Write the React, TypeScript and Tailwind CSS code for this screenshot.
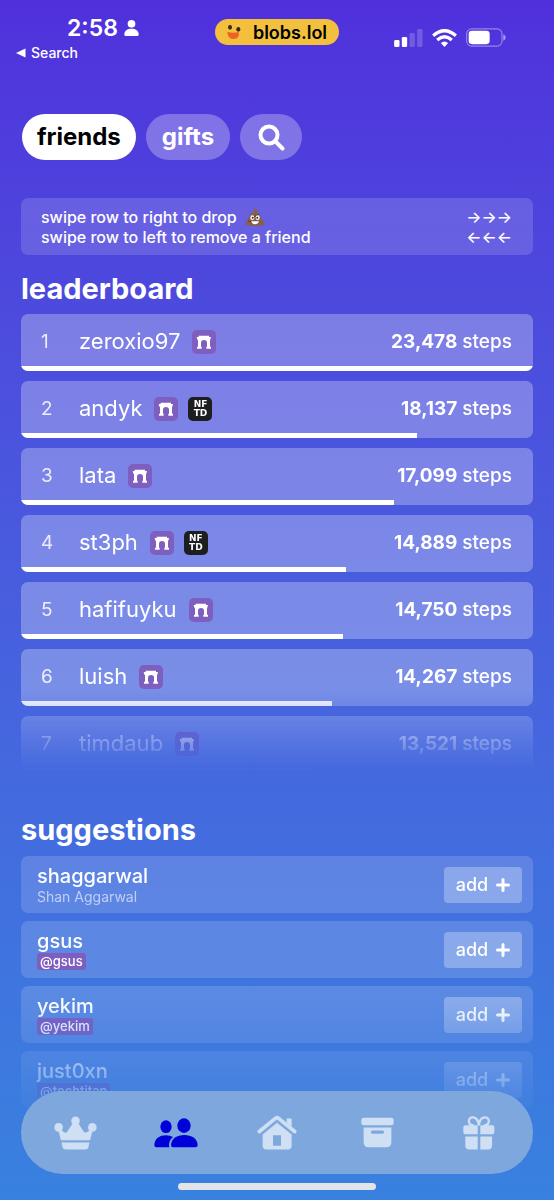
import React from "react";

type Player = { name: string; steps: number; nftd?: boolean };

const players: Player[] = [
  { name: "zeroxio97", steps: 23478 },
  { name: "andyk", steps: 18137, nftd: true },
  { name: "lata", steps: 17099 },
  { name: "st3ph", steps: 14889, nftd: true },
  { name: "hafifuyku", steps: 14750 },
  { name: "luish", steps: 14267 },
  { name: "timdaub", steps: 13521 },
];

const suggestions = [
  { name: "shaggarwal", note: "Shan Aggarwal", handle: false },
  { name: "gsus", note: "@gsus", handle: true },
  { name: "yekim", note: "@yekim", handle: true },
  { name: "just0xn", note: "@techtitan", handle: true },
];

function StatusBar() {
  return (
    <header className="grid h-[66px] grid-cols-[1fr_auto_1fr] items-start px-4 pt-4">
      <div>
        <div className="flex items-center gap-[6px] pl-[51px]">
          <span className="text-[23px] leading-6 font-semibold">2:58</span>
          <svg viewBox="0 0 45 50" className="h-4 w-[15px]" fill="currentColor" aria-hidden="true">
            <circle cx="22.5" cy="12" r="12" />
            <path d="M0 45C0 33 10 27 22.500 27S45 33 45 45q0 5-5 5H5q-5 0-5-5z" />
          </svg>
        </div>
        <a href="#search" className="mt-1 flex items-center gap-[5px] text-[14px] leading-[18px] font-medium">
          <svg viewBox="0 0 10 10" className="size-[10px]" fill="currentColor" aria-hidden="true">
            <path d="M0 5 9.500.5v9z" />
          </svg>
          Search
        </a>
      </div>
      <div className="mt-[3px] flex h-[26px] items-center gap-3 rounded-full bg-[#f3c03e] px-3 text-[18px] font-semibold text-black">
        <svg viewBox="0 0 42 42" className="size-[14px]" aria-hidden="true">
          <ellipse cx="9" cy="7" rx="6" ry="7" fill="#3c2a16" />
          <ellipse cx="34" cy="13" rx="6" ry="7" fill="#3c2a16" />
          <path d="M1 20q16 6 34 1q4 21-15 21Q2 42 1 20z" fill="#ef6225" />
        </svg>
        <span>blobs.lol</span>
      </div>
      <div className="mt-3 flex items-center justify-end gap-[9px] pr-8">
        <svg viewBox="0 0 86 54" className="h-[18px] w-[29px]" fill="currentColor" aria-hidden="true">
          <rect x="0" y="33" width="16" height="21" rx="4" />
          <rect x="23" y="24" width="16" height="30" rx="4" />
          <rect x="46" y="12" width="16" height="42" rx="4" opacity=".2" />
          <rect x="69" y="0" width="16" height="54" rx="4" opacity=".2" />
        </svg>
        <svg viewBox="0 0 74 54" className="h-[18px] w-[25px]" fill="none" stroke="currentColor" strokeWidth="10" aria-hidden="true">
          <path d="M3 20Q37-10 71 20" />
          <path d="M15 33Q37 14 59 33" />
          <path d="M26 42Q37 33 48 42L37 54z" fill="currentColor" stroke="none" />
        </svg>
        <svg viewBox="0 0 120 56" className="h-[19px] w-10" aria-hidden="true">
          <rect x="2" y="2" width="106" height="52" rx="15" fill="none" stroke="#fff" strokeOpacity=".4" strokeWidth="3.500" />
          <rect x="8" y="8" width="63" height="40" rx="10" fill="#fff" />
          <path d="M112 18q7 3 7 10t-7 10z" fill="#fff" fillOpacity=".5" />
        </svg>
      </div>
    </header>
  );
}

function ArchBadge() {
  return (
    <svg viewBox="0 0 72 72" className="size-6 shrink-0" role="img" aria-label="farcaster">
      <rect width="72" height="72" rx="15" fill="#7e5fc0" />
      <path
        d="M20 17H51V21H57L55 29H54V50H57V56H43V50H45V38Q45 30 36 30T27 38V50H29V56H15V50H18V29H16L14 21H20z"
        fill="#fff"
      />
    </svg>
  );
}

function NftdBadge() {
  return (
    <span className="flex size-6 shrink-0 flex-col items-center justify-center rounded-[5px] bg-[#1d1e20] font-['DejaVu_Sans',sans-serif] text-[9px] leading-[9px] font-bold">
      <span>NF</span>
      <span>TD</span>
    </span>
  );
}

function Poop() {
  return (
    <svg viewBox="0 0 60 54" className="h-[18px] w-5" role="img" aria-label="poop">
      <path
        d="M27 0Q39 5 38 14Q47 18 45 26Q55 30 51 37Q62 42 58 49Q55 54 30 54T2 49Q-1 41 9 37Q5 29 15 25Q13 17 22 14Q30 10 27 0z"
        fill="#86604c"
      />
      <path d="M16 26Q30 27 42 19M10 38Q12 41 18 41" fill="none" stroke="#56372b" strokeWidth="3" />
      <ellipse cx="22" cy="29" rx="6" ry="7" fill="#fff" />
      <ellipse cx="38" cy="29" rx="6" ry="7" fill="#fff" />
      <circle cx="23" cy="29" r="3" fill="#222" />
      <circle cx="37" cy="29" r="3" fill="#222" />
      <path d="M19 40H42Q39 49 30 49T19 40z" fill="#fff" />
    </svg>
  );
}

function PlayerRow({ player, rank, top }: { player: Player; rank: number; top: number }) {
  return (
    <li className="flex h-[57px] shrink-0 flex-col overflow-hidden rounded-[7px] bg-white/28">
      <div className="flex flex-1 items-center pt-[3px] pr-[21px] pl-5 leading-[27px]">
        <span className="w-[38px] text-[19px] text-white/85">{rank}</span>
        <span className="text-[22px]">{player.name}</span>
        <span className="ml-3 flex gap-[10px]">
          <ArchBadge />
          {player.nftd && <NftdBadge />}
        </span>
        <span className="ml-auto text-[19px] font-medium">
          <b className="font-bold">{player.steps.toLocaleString("en-US")}</b> steps
        </span>
      </div>
      <div className="h-[5px] bg-white" style={{ width: `${(player.steps / top) * 100}%` }} />
    </li>
  );
}

function CrownIcon() {
  return (
    <svg viewBox="163 228 130 100" className="h-[34px] w-[43px]" fill="currentColor" aria-hidden="true">
      <circle cx="228" cy="241" r="13" />
      <circle cx="177" cy="261" r="13" />
      <circle cx="279" cy="261" r="13" />
      <path d="M174 261L184 300H272L282 261L262 276Q256 279 252 273L234 245H222L204 273Q200 279 194 276z" />
      <path d="M186 307H270L267 321Q265 328 258 328H198Q191 328 189 321z" />
    </svg>
  );
}

function PeopleIcon() {
  return (
    <svg viewBox="464 233 132 90" className="h-[30px] w-11" fill="currentColor" aria-hidden="true">
      <ellipse cx="500" cy="259" rx="17" ry="19" />
      <path d="M465 314C466 295 480 285 500 285Q512 285 521 290C512 297 507 309 510 321H471Q465 321 465 314z" />
      <ellipse cx="554" cy="256" rx="20" ry="22" />
      <path d="M515 314C516 295 533 284 555 284S594 295 595 314Q595 321 588 321H522Q515 321 515 314z" />
    </svg>
  );
}

function HouseIcon() {
  return (
    <svg viewBox="772 226 120 104" className="h-[35px] w-10" fill="currentColor" aria-hidden="true">
      <path d="M779 275L828 235Q832 232 836 235L885 275" fill="none" stroke="currentColor" strokeWidth="11" strokeLinecap="round" />
      <path d="M861 236H872Q876 236 876 240V261L861 249z" />
      <path fillRule="evenodd" d="M789 284L832 249L876 284V318Q876 329 865 329H800Q789 329 789 318zM820 286V318H844V286z" />
    </svg>
  );
}

function ArchiveIcon() {
  return (
    <svg viewBox="252 233 100 92" className="h-[31px] w-[33px]" fill="currentColor" aria-hidden="true">
      <rect x="253" y="234" width="98" height="23" rx="7" />
      <path fillRule="evenodd" d="M260 264H344V308Q344 324 329 324H275Q260 324 260 308zM287 273a5 5 0 0 0 0 10H317a5 5 0 0 0 0-10z" />
    </svg>
  );
}

function GiftIcon() {
  return (
    <svg viewBox="555 226 98 103" className="h-[34px] w-8" fill="currentColor" aria-hidden="true">
      <path d="M600 254H562Q556 254 556 260V275Q556 281 562 281H600zM608 254H645Q651 254 651 260V275Q651 281 645 281H608z" />
      <path d="M600 288H562V316Q562 328 574 328H600zM608 288H644V316Q644 328 632 328H608z" />
      <path d="M603 254C601 223 572 224 573 242Q574 254 588 254M604 254C606 223 635 224 634 242Q633 254 619 254" fill="none" stroke="currentColor" strokeWidth="7" />
    </svg>
  );
}

const tabs = [
  { label: "crown", icon: <CrownIcon />, active: false },
  { label: "friends", icon: <PeopleIcon />, active: true },
  { label: "home", icon: <HouseIcon />, active: false },
  { label: "archive", icon: <ArchiveIcon />, active: false },
  { label: "gifts", icon: <GiftIcon />, active: false },
];

export default function App() {
  return (
    <div className="h-screen overflow-hidden bg-linear-to-b from-[#5030dc] to-[#3881df] font-[Inter,sans-serif] text-white">
      <StatusBar />
      <main className="px-[21px] pt-12">
        <div className="flex h-[46px] gap-[10px] text-[24px] font-bold">
          <button type="button" className="ml-px rounded-full bg-white px-[15px] text-black">friends</button>
          <button type="button" className="rounded-full bg-white/28 px-4">gifts</button>
          <button type="button" aria-label="search" className="flex w-[62px] items-center justify-center rounded-full bg-white/28">
            <svg viewBox="0 0 27 27" className="size-[27px]" fill="none" stroke="currentColor" strokeWidth="4" strokeLinecap="round" aria-hidden="true">
              <circle cx="11" cy="11" r="8.500" />
              <path d="M17.500 17.500 24.500 24.500" />
            </svg>
          </button>
        </div>

        <section className="mt-[38px] flex h-[57px] items-center justify-between rounded-[7px] bg-white/15 pr-[21px] pl-5 text-[16px] leading-5 font-medium">
          <div>
            <p className="flex items-center gap-2">swipe row to right to drop <Poop /></p>
            <p>swipe row to left to remove a friend</p>
          </div>
          <div>
            <p>→→→</p>
            <p>←←←</p>
          </div>
        </section>

        <h2 className="mt-4 text-[29px] leading-9 font-bold">leaderboard</h2>
        <ol className="mt-[7px] flex h-[456px] flex-col gap-[10px] overflow-hidden [mask-image:linear-gradient(to_bottom,black_376px,transparent_456px)]">
          {players.map((p, i) => (
            <PlayerRow key={p.name} player={p} rank={i + 1} top={players[0].steps} />
          ))}
        </ol>

        <h2 className="mt-[42px] text-[29px] leading-9 font-bold">suggestions</h2>
        <ul className="mt-2 flex flex-col gap-2 [mask-image:linear-gradient(to_bottom,black_144px,transparent_274px)]">
          {suggestions.map((s) => (
            <li key={s.name} className="flex h-[57px] items-center justify-between rounded-[7px] bg-white/15 pr-[11px] pl-4">
              <div className="flex flex-col items-start">
                <span className="text-[20px] leading-6 font-medium">{s.name}</span>
                {s.handle ? (
                  <span className="rounded-[3px] bg-[#7e5fc0] px-[3px] text-[13px] leading-[17px] font-medium">{s.note}</span>
                ) : (
                  <span className="text-[14px] leading-[17px] text-white/60">{s.note}</span>
                )}
              </div>
              <button type="button" className="flex h-9 w-[78px] items-center justify-center gap-2 rounded-[4px] bg-white/28 text-[18px] font-medium">
                add
                <svg viewBox="0 0 14 14" className="size-[14px]" stroke="currentColor" strokeWidth="3" strokeLinecap="round" aria-hidden="true">
                  <path d="M7 1.500v11M1.500 7h11" />
                </svg>
              </button>
            </li>
          ))}
        </ul>
      </main>

      <div className="fixed inset-x-0 bottom-0 flex flex-col items-center px-[21px] pb-[10px]">
        <nav className="grid h-[83px] w-full grid-cols-5 rounded-[42px] bg-[#7ea8dd] px-1">
          {tabs.map((t) => (
            <button
              key={t.label}
              type="button"
              aria-label={t.label}
              className={t.active ? "flex items-center justify-center text-[#0000d8]" : "flex items-center justify-center text-[#cfdff4]"}
            >
              {t.icon}
            </button>
          ))}
        </nav>
        <div className="mt-[9px] h-[7px] w-[198px] rounded-full bg-[#e2e4e8]" />
      </div>
    </div>
  );
}
